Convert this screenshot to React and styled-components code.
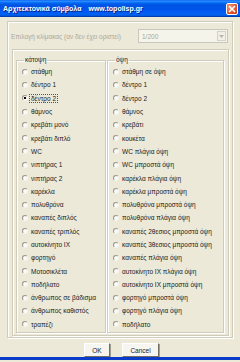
import React from "react";
import styled, { createGlobalStyle } from "styled-components";

const GlobalStyle = createGlobalStyle`
  html, body {
    margin: 0;
    padding: 0;
    background: #ffffff;
  }
  body {
    font-family: "Liberation Sans", Arial, sans-serif;
  }
`;

const planItems = [
  "στάθμη",
  "δέντρο 1",
  "δέντρο 2",
  "θάμνος",
  "κρεβάτι μονό",
  "κρεβάτι διπλό",
  "WC",
  "νιπτήρας 1",
  "νιπτήρας 2",
  "καρέκλα",
  "πολυθρόνα",
  "καναπές διπλός",
  "καναπές τριπλός",
  "αυτοκίνητο ΙΧ",
  "φορτηγό",
  "Μοτοσικλέτα",
  "ποδήλατο",
  "άνθρωπος σε βάδισμα",
  "άνθρωπος καθιστός",
  "τραπέζι"
];

const elevationItems = [
  "στάθμη σε όψη",
  "δέντρο 1",
  "δέντρο 2",
  "θάμνος",
  "κρεβάτι",
  "κουκέτα",
  "WC πλάγια όψη",
  "WC μπροστά όψη",
  "καρέκλα πλάγια όψη",
  "καρέκλα μπροστά όψη",
  "πολυθρόνα μπροστά όψη",
  "πολυθρόνα πλάγια όψη",
  "καναπές 2θεσιος μπροστά όψη",
  "καναπές 3θεσιος μπροστά όψη",
  "καναπές πλάγια όψη",
  "αυτοκίνητο ΙΧ πλάγια όψη",
  "αυτοκίνητο ΙΧ μπροστά όψη",
  "φορτηγό μπροστά όψη",
  "φορτηγό πλάγια όψη",
  "ποδήλατο"
];

export default function App() {
  return (
    <>
      <GlobalStyle />
      <Window>
        <TitleBar>
          <Title>
            Αρχιτεκτονικά σύμβολα<TitleSite>www.topolisp.gr</TitleSite>
          </Title>
          <CloseButton>
            <svg width="8" height="8" viewBox="0 0 8 8">
              <path d="M1 1L7 7M7 1L1 7" stroke="#fff" strokeWidth="1.6" />
            </svg>
          </CloseButton>
        </TitleBar>
        <Body>
          <OuterFrame>
            <ScaleRow>
              <DisabledLabel>Επιλογή κλίμακας (αν δεν έχει οριστεί)</DisabledLabel>
              <Select>
                <SelectText>1/200</SelectText>
                <SelectArrow>
                  <svg width="5" height="3" viewBox="0 0 5 3">
                    <path d="M0 0H5L2.5 3Z" fill="#b8b6aa" />
                  </svg>
                </SelectArrow>
              </Select>
            </ScaleRow>
            <InnerFrame>
              <GroupBox $width={90}>
                <Legend>κάτοψη</Legend>
                {planItems.map((item, i) => (
                  <Option key={i}>
                    <Radio $checked={i === 2} />
                    <OptionText $focused={i === 2}>{item}</OptionText>
                  </Option>
                ))}
              </GroupBox>
              <GroupBox $width={117}>
                <Legend>όψη</Legend>
                {elevationItems.map((item, i) => (
                  <Option key={i}>
                    <Radio />
                    <OptionText>{item}</OptionText>
                  </Option>
                ))}
              </GroupBox>
            </InnerFrame>
          </OuterFrame>
          <ButtonRow>
            <DialogButton $width={26}>OK</DialogButton>
            <DialogButton $width={37}>Cancel</DialogButton>
          </ButtonRow>
        </Body>
        <BottomEdge />
      </Window>
    </>
  );
}

const Window = styled.div`
  width: 240px;
  height: 362px;
  display: flex;
  flex-direction: column;
  background: #ece9d8;
  overflow: hidden;
  font-size: 6.5px;
  color: #1a1a1a;
`;

const TitleBar = styled.div`
  height: 17px;
  flex-shrink: 0;
  display: flex;
  align-items: center;
  justify-content: space-between;
  padding: 0 2px 0 3px;
  box-sizing: border-box;
  background: linear-gradient(
    #0058ee 0%,
    #3593ff 6%,
    #127dff 12%,
    #0262ee 20%,
    #0054e3 30%,
    #0055eb 60%,
    #005bf5 72%,
    #0062ef 86%,
    #0052d6 94%,
    #003092 100%
  );
`;

const Title = styled.div`
  color: #fff;
  font-weight: bold;
  font-size: 7px;
  text-shadow: 1px 1px 0 #0a1f80;
  white-space: nowrap;
`;

const TitleSite = styled.span`
  margin-left: 7px;
`;

const CloseButton = styled.div`
  width: 12px;
  height: 12px;
  box-sizing: border-box;
  border: 1px solid #fff;
  border-radius: 2px;
  background: radial-gradient(circle at 30% 30%, #f29a7a, #e0512b 60%, #c7401c);
  display: flex;
  align-items: center;
  justify-content: center;
`;

const Body = styled.div`
  flex: 1;
  display: flex;
  flex-direction: column;
  padding: 4px 7px 0 7px;
`;

const etched = `
  border: 1px solid #cfccbc;
  box-shadow: 1px 1px 0 #fff, inset 1px 1px 0 #fff;
`;

const OuterFrame = styled.div`
  ${etched}
  height: 317px;
  box-sizing: border-box;
  display: flex;
  flex-direction: column;
`;

const ScaleRow = styled.div`
  display: flex;
  align-items: center;
  justify-content: space-between;
  margin: 7px 4px 0 3px;
  height: 14px;
`;

const DisabledLabel = styled.span`
  color: #aca899;
  white-space: nowrap;
`;

const Select = styled.div`
  width: 90px;
  height: 14px;
  box-sizing: border-box;
  border: 1px solid #c9c7ba;
  background: #f5f4ea;
  display: flex;
  align-items: center;
  justify-content: space-between;
  padding: 1px;
`;

const SelectText = styled.span`
  color: #aca899;
  padding-left: 2px;
`;

const SelectArrow = styled.div`
  width: 9px;
  height: 10px;
  box-sizing: border-box;
  border: 1px solid #d4d2c6;
  background: #f1efe6;
  display: flex;
  align-items: center;
  justify-content: center;
`;

const InnerFrame = styled.div`
  ${etched}
  flex: 1;
  margin: 6px 3px 1px 4px;
  display: flex;
  gap: 1px;
  padding: 0 4px 0 3px;
  box-sizing: border-box;
`;

const GroupBox = styled.fieldset`
  ${etched}
  width: ${(p) => p.$width}px;
  box-sizing: border-box;
  margin: 6px 0 2px 0;
  padding: 1px 0 0 5px;
  min-width: 0;
  display: flex;
  flex-direction: column;
`;

const Legend = styled.legend`
  padding: 0 1px;
  margin-left: 2px;
  font-size: 6.5px;
  line-height: 8px;
`;

const Option = styled.div`
  height: 13.3px;
  display: flex;
  align-items: center;
  gap: 2px;
  white-space: nowrap;
`;

const Radio = styled.span`
  width: 6px;
  height: 6px;
  flex-shrink: 0;
  box-sizing: border-box;
  border-radius: 50%;
  border: 1px solid;
  border-color: #9a988c #f4f3ec #f4f3ec #9a988c;
  background: ${(p) =>
    p.$checked ? "radial-gradient(circle, #000 0 1.2px, #fbfbf8 1.5px)" : "#fbfbf8"};
`;

const OptionText = styled.span`
  padding: 0 1px;
  outline: ${(p) => (p.$focused ? "1px dotted #555" : "none")};
`;

const ButtonRow = styled.div`
  display: flex;
  justify-content: center;
  gap: 12px;
  margin-top: 5px;
  padding-left: 3px;
`;

const DialogButton = styled.div`
  width: ${(p) => p.$width}px;
  height: 14px;
  box-sizing: border-box;
  display: flex;
  align-items: center;
  justify-content: center;
  background: #f6f5f0;
  border: 1px solid;
  border-color: #fff #716f64 #716f64 #fff;
  box-shadow: 1px 1px 0 #a09e93;
  font-size: 6.5px;
`;

const BottomEdge = styled.div`
  height: 3px;
  margin-bottom: 2px;
  background: #0b3bc9;
`;
